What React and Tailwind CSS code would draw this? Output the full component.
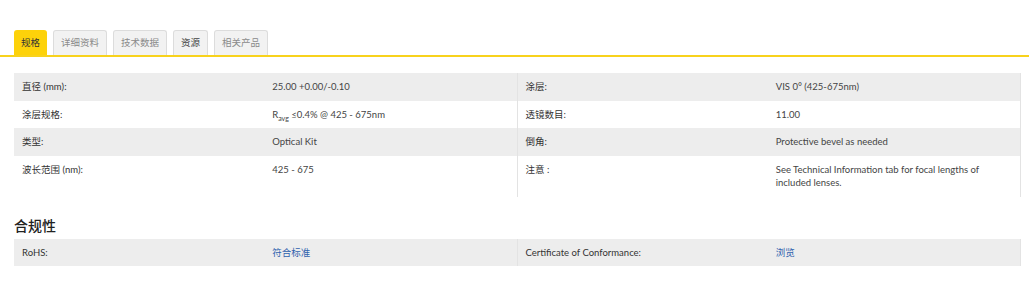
const FONT = "font-['Lato','Noto_Sans_CJK_SC',sans-serif]";

const TABS = [
  { label: '规格', active: true },
  { label: '详细资料' },
  { label: '技术数据' },
  { label: '资源', dark: true },
  { label: '相关产品' },
];

const Cell = ({ label, children }) => (
  <div className="grid grid-cols-2 border-r border-[#e3e3e3]">
    <div className="px-2 py-[7px] text-[#333]">{label}</div>
    <div className="px-[7px] py-[7px] text-[#444]">{children}</div>
  </div>
);

const Row = ({ gray, left, right }) => (
  <div className={`grid grid-cols-2 ${gray ? 'bg-[#ededed]' : 'bg-white'}`}>
    <Cell label={left[0]}>{left[1]}</Cell>
    <Cell label={right[0]}>{right[1]}</Cell>
  </div>
);

const Link = ({ children }) => <span className="text-[#2f62ad]">{children}</span>;

export default function App() {
  return (
    <div className={`w-[1029px] h-[297px] bg-white ${FONT} text-[9.5px] leading-[13.5px]`}>
      <div className="pt-[30px]">
        <div className="flex items-end gap-[6px] px-[14px] h-[25px]">
          {TABS.map((t) => (
            <div
              key={t.label}
              className={`h-[25px] flex items-center rounded-t-[3px] text-[9.5px] ${
                t.active
                  ? 'bg-[#fdd20a] text-[#333] px-[7px]'
                  : `px-[7px] bg-[#f2f2f2] border border-b-0 border-[#dcdcdc] ${t.dark ? 'text-[#444]' : 'text-[#8a8a8a]'}`
              }`}
            >
              {t.label}
            </div>
          ))}
        </div>
        <div className="h-[2px] bg-[#f8d21c]" />
      </div>

      <div className="mt-4 ml-[14px] mr-[8px]">
        <Row gray left={['直径 (mm):', '25.00 +0.00/-0.10']} right={['涂层:', 'VIS 0° (425-675nm)']} />
        <Row
          left={[
            '涂层规格:',
            <span>
              R<sub className="text-[7px] align-[-2px]">avg</sub> ≤0.4% @ 425 - 675nm
            </span>,
          ]}
          right={['透镜数目:', '11.00']}
        />
        <Row gray left={['类型:', 'Optical Kit']} right={['倒角:', 'Protective bevel as needed']} />
        <Row
          left={['波长范围 (nm):', '425 - 675']}
          right={[
            '注意 :',
            <span>
              See Technical Information tab for focal lengths of
              <br />
              included lenses.
            </span>,
          ]}
        />
      </div>

      <div className="mt-[19px] ml-[14px] text-[14px] leading-[20px] font-medium text-[#222]">合规性</div>

      <div className="mt-[3px] ml-[14px] mr-[8px]">
        <Row
          gray
          left={['RoHS:', <Link>符合标准</Link>]}
          right={['Certificate of Conformance:', <Link>浏览</Link>]}
        />
      </div>
    </div>
  );
}
